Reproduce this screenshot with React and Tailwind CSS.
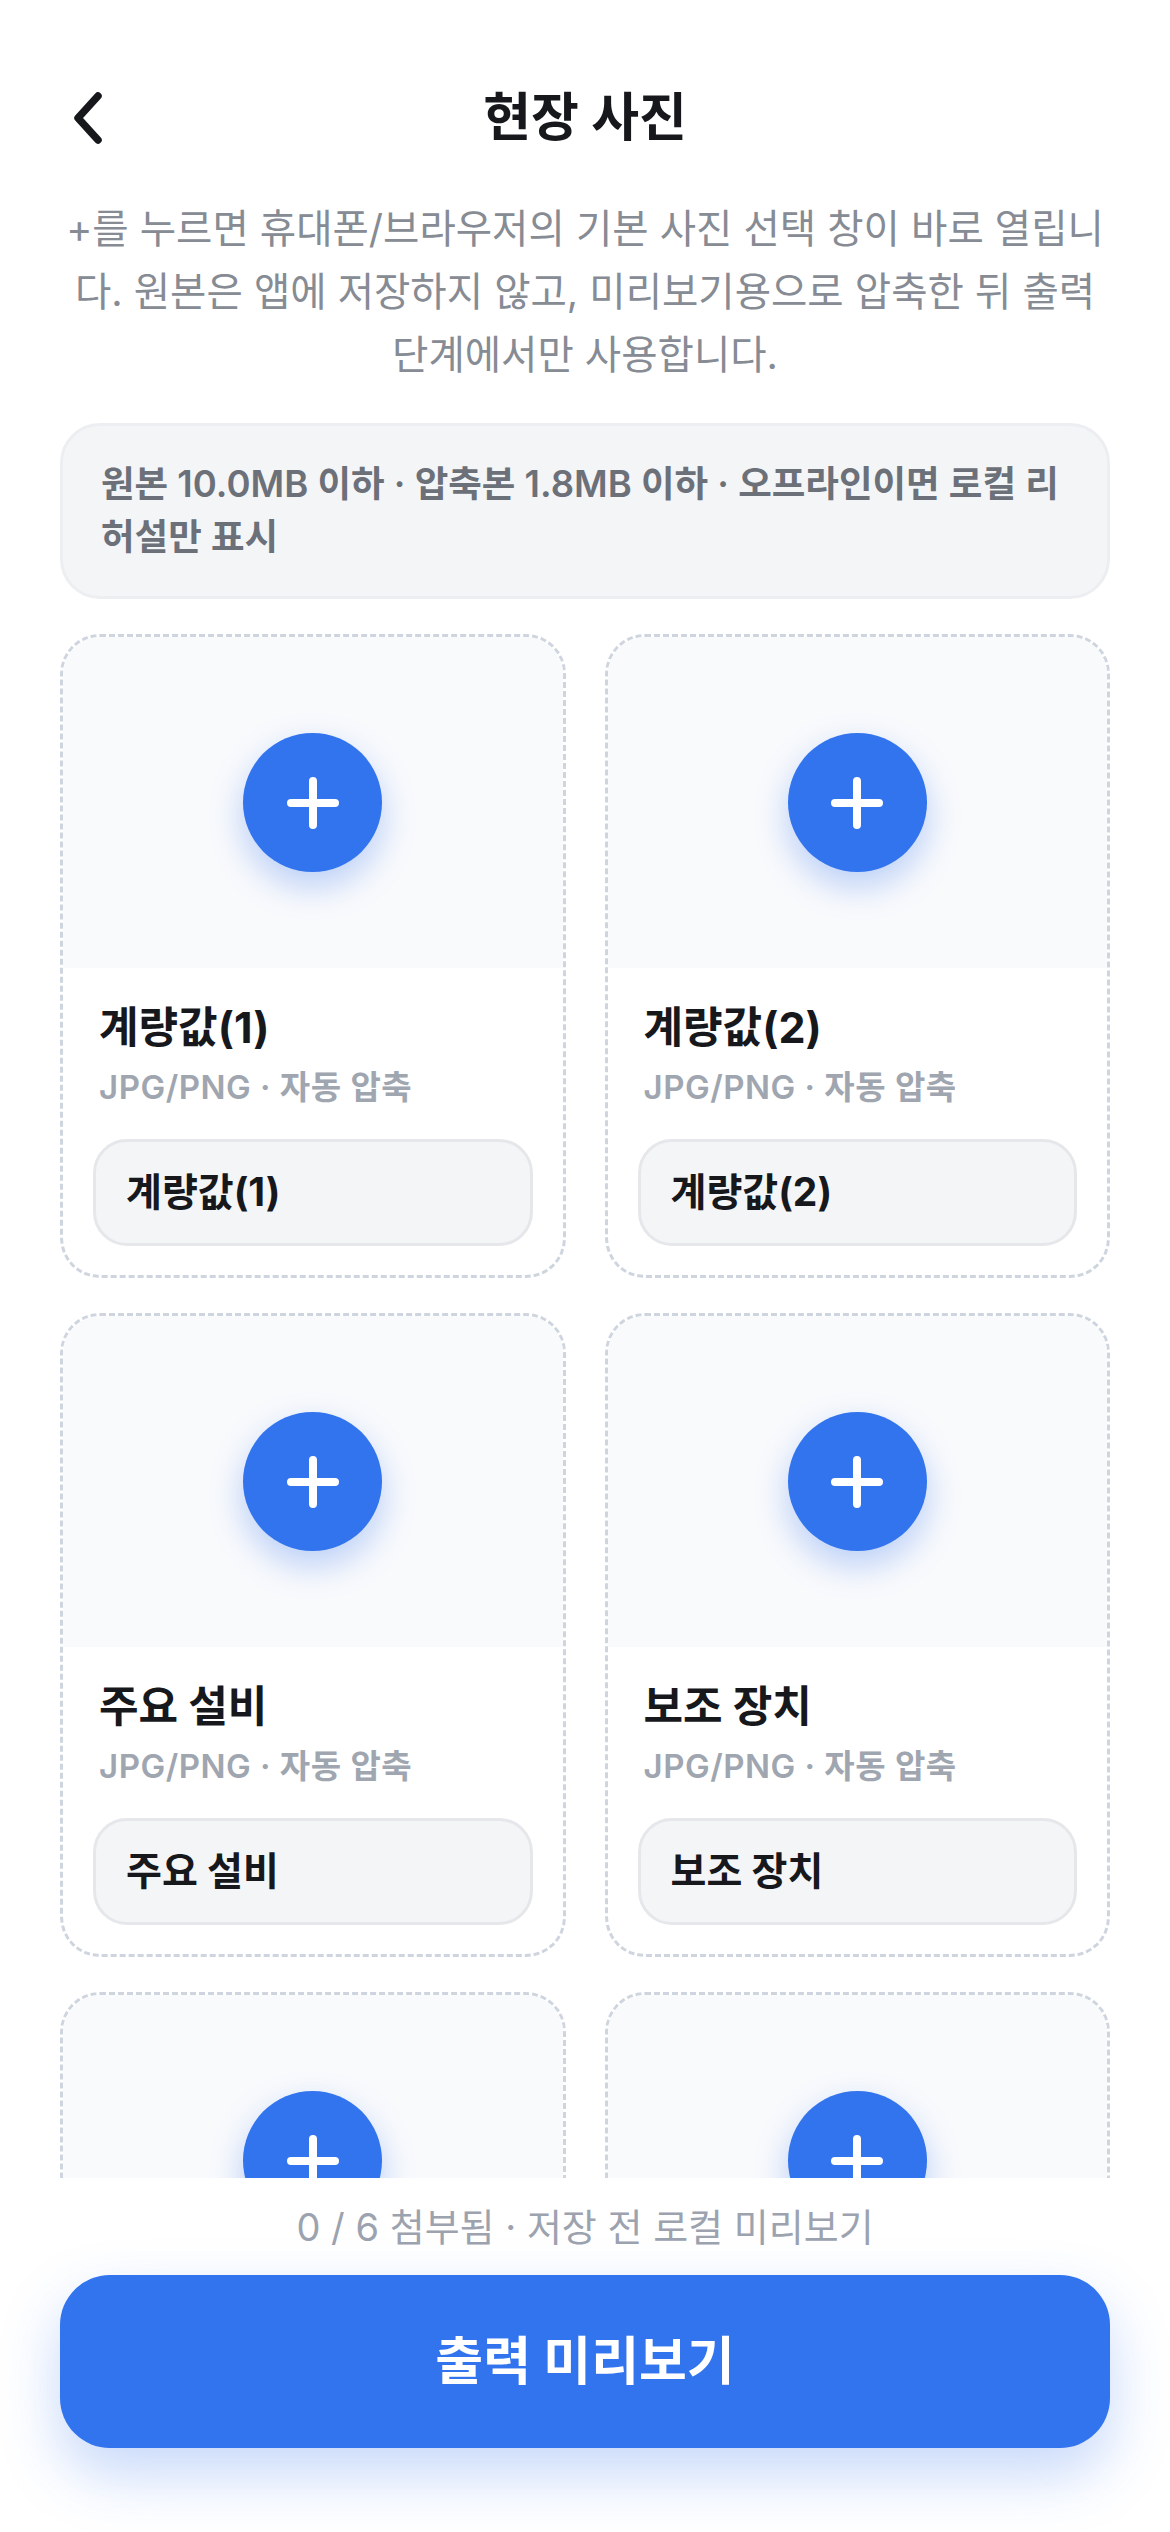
import React from "react";

const slots = [
    { id: 1, title: "계량값(1)" },
    { id: 2, title: "계량값(2)" },
    { id: 3, title: "주요 설비" },
    { id: 4, title: "보조 장치" },
    { id: 5, title: "기타(1)" },
    { id: 6, title: "기타(2)" },
];

const BackIcon = () => (
    <svg width="40" height="60" viewBox="0 0 40 60" fill="none">
        <path
            d="M30 8 L10 30 L30 52"
            stroke="#17181c"
            strokeWidth="7.5"
            strokeLinecap="round"
            strokeLinejoin="round"
        />
    </svg>
);

const PlusIcon = () => (
    <svg width="52" height="52" viewBox="0 0 52 52" fill="none">
        <path d="M26 4 V48 M4 26 H48" stroke="white" strokeWidth="8" strokeLinecap="round" />
    </svg>
);

const PhotoSlot = ({ title }) => {
    return (
        <div className="rounded-[40px] border-[3px] border-dashed border-[#cfd5de] bg-white overflow-hidden">
            <div className="h-[331px] bg-[#f9fafc] flex items-center justify-center">
                <button className="w-[139px] h-[139px] rounded-full bg-[#3174ee] flex items-center justify-center shadow-[0_14px_34px_rgba(49,116,238,0.32)]">
                    <PlusIcon />
                </button>
            </div>
            <div className="px-[30px] pt-[33px] pb-[29px]">
                <div className="pl-[6px] text-[43px] leading-[52px] font-bold text-[#17181c]">
                    {title}
                </div>
                <div className="pl-[6px] mt-[13px] text-[33px] leading-[42px] font-semibold text-[#a0a6b0] tracking-[0.5px]">
                    JPG/PNG · 자동 압축
                </div>
                <div className="mt-[31px] h-[107px] rounded-[34px] border-[3px] border-[#e5e7eb] bg-[#f4f5f7] flex items-center px-[30px]">
                    <span className="text-[39px] font-bold text-[#17181c]">{title}</span>
                </div>
            </div>
        </div>
    );
};

export default function App() {
    return (
        <div className="w-[1170px] h-[2532px] flex flex-col bg-white overflow-hidden font-['Inter','Noto_Sans_CJK_KR',sans-serif]">
            <div className="flex-1 min-h-0 overflow-hidden px-[60px]">
                <header className="mt-[70px] h-[96px] grid grid-cols-[120px_1fr_120px] items-center">
                    <button className="flex items-center pl-[8px]">
                        <BackIcon />
                    </button>
                    <h1 className="text-center text-[52px] font-bold text-[#17181c]">현장 사진</h1>
                    <div />
                </header>

                <p className="mt-[32px] px-[4px] text-center text-[39.5px] leading-[63px] text-[#868b94]">
                    +를 누르면 휴대폰/브라우저의 기본 사진 선택 창이 바로 열립니다. 원본은 앱에 저장하지 않고, 미리보기용으로 압축한 뒤 출력 단계에서만 사용합니다.
                </p>

                <div className="mt-[36px] rounded-[40px] border-[3px] border-[#eceef1] bg-[#f4f5f7] pl-[38px] pr-[20px] py-[32px]">
                    <p className="text-[36.5px] leading-[53px] font-semibold text-[#6b7079]">
                        원본 10.0MB 이하 · 압축본 1.8MB 이하 · 오프라인이면 로컬 리허설만 표시
                    </p>
                </div>

                <div className="mt-[35px] grid grid-cols-2 gap-x-[39px] gap-y-[35px]">
                    {slots.map((s) => (
                        <PhotoSlot key={s.id} title={s.title} />
                    ))}
                </div>
            </div>

            <div className="bg-white px-[60px] pt-[24px] pb-[84px]">
                <p className="text-center text-[38px] leading-[50px] text-[#9ca3af]">
                    0 / 6 첨부됨 · 저장 전 로컬 미리보기
                </p>
                <button className="mt-[23px] w-full h-[173px] rounded-[50px] bg-[#3174ee] text-white text-[52px] font-bold shadow-[0_26px_60px_rgba(49,116,238,0.28)]">
                    출력 미리보기
                </button>
            </div>
        </div>
    );
}
